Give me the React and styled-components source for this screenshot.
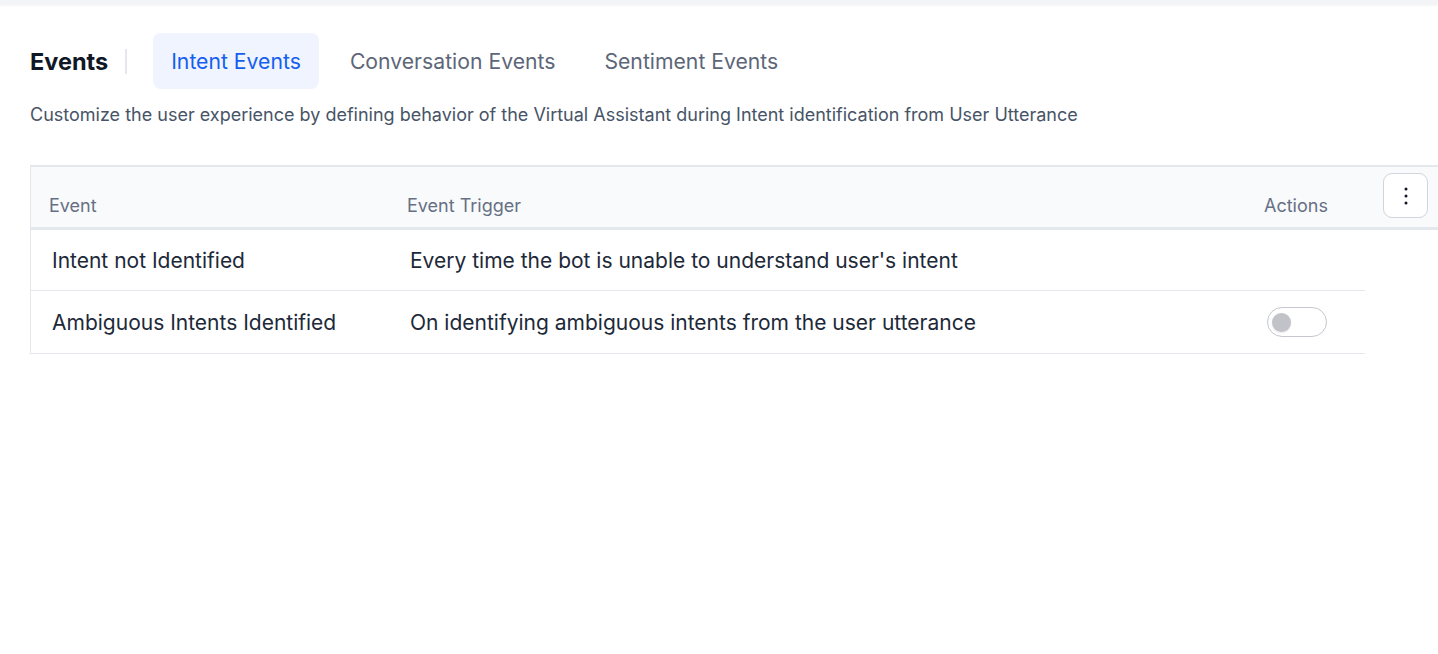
import React, { useState } from 'react'
import styled, { createGlobalStyle } from 'styled-components'

const GlobalStyle = createGlobalStyle`
  html, body {
    margin: 0;
    padding: 0;
    background: #ffffff;
    overflow: hidden;
  }
  body {
    font-family: Inter, "Noto Sans", sans-serif;
    color: #101828;
  }
  * {
    box-sizing: border-box;
  }
`

const TopBar = styled.div`
  height: 4px;
  background: #f2f4f7;
  box-shadow: 0 1px 3px rgba(16, 24, 40, 0.08);
`

const Content = styled.div`
  padding: 29px 0 0 30px;
`

const TabsRow = styled.div`
  display: flex;
  align-items: center;
`

const Title = styled.h1`
  margin: 0;
  font-size: 23.5px;
  font-weight: 700;
  color: #101828;
  padding-right: 17px;
  border-right: 2px solid #e4e7ec;
  line-height: 25px;
  margin-right: 26px;
`

const Tab = styled.button`
  border: none;
  background: ${p => (p.$active ? '#eff4ff' : 'transparent')};
  color: ${p => (p.$active ? '#155eef' : '#5d6679')};
  font-family: inherit;
  font-size: 21.2px;
  font-weight: 400;
  height: 56px;
  padding: 0 18px;
  border-radius: 8px;
  margin-right: 13px;
  cursor: pointer;
`

const Description = styled.p`
  margin: 14px 0 0;
  font-size: 18px;
  color: #475467;
  line-height: 24px;
`

const Table = styled.div`
  margin-top: 38px;
  width: 1335px;
`

const HeadRow = styled.div`
  display: grid;
  grid-template-columns: 358px 857px 1fr;
  width: 1410px;
  height: 65px;
  background: #f9fafb;
  border-top: 2px solid #e4e7ec;
  border-left: 1px solid #e4e7ec;
  border-bottom: 3px solid #e4e7ec;
  position: relative;
`

const HeadCell = styled.div`
  display: flex;
  align-items: flex-end;
  padding: 0 0 11px 18px;
  font-size: 18px;
  color: #667085;
`

const Row = styled.div`
  display: grid;
  grid-template-columns: 358px 857px 1fr;
  height: ${p => p.$h}px;
  border-left: 1px solid #e4e7ec;
  border-bottom: 1px solid #e4e7ec;
  align-items: center;
`

const Cell = styled.div`
  padding-left: 21px;
  font-size: 21px;
  color: #1d2939;
`

const KebabButton = styled.button`
  position: absolute;
  right: 12px;
  top: 6px;
  width: 45px;
  height: 45px;
  border-radius: 9px;
  border: 1px solid #d0d5dd;
  background: #ffffff;
  display: flex;
  align-items: center;
  justify-content: center;
  padding: 0;
  cursor: pointer;
`

const Switch = styled.button`
  width: 60px;
  height: 30px;
  border-radius: 15px;
  border: 1px solid #c4c7ce;
  background: #ffffff;
  padding: 0 0 0 4px;
  display: flex;
  align-items: center;
  justify-content: ${p => (p.$on ? 'flex-end' : 'flex-start')};
  cursor: pointer;
  margin-left: 21px;
`

const Knob = styled.span`
  width: 19px;
  height: 19px;
  border-radius: 50%;
  background: #c1c3c9;
  box-shadow: 0 1px 2px rgba(16, 24, 40, 0.1);
`

const tabs = ['Intent Events', 'Conversation Events', 'Sentiment Events']

const rows = [
  { name: 'Intent not Identified', trigger: "Every time the bot is unable to understand user's intent", toggle: false, h: 61 },
  { name: 'Ambiguous Intents Identified', trigger: 'On identifying ambiguous intents from the user utterance', toggle: true, h: 63 },
]

export default function App() {
  const [active, setActive] = useState(0)
  const [on, setOn] = useState(false)

  return (
    <>
      <GlobalStyle />
      <TopBar />
      <Content>
        <TabsRow>
          <Title>Events</Title>
          {tabs.map((t, i) => (
            <Tab key={t} $active={i === active} onClick={() => setActive(i)}>
              {t}
            </Tab>
          ))}
        </TabsRow>
        <Description>
          Customize the user experience by defining behavior of the Virtual Assistant during Intent identification from User Utterance
        </Description>
        <Table>
          <HeadRow>
            <HeadCell>Event</HeadCell>
            <HeadCell>Event Trigger</HeadCell>
            <HeadCell>Actions</HeadCell>
            <KebabButton>
              <svg width="4" height="18" viewBox="0 0 4 18">
                <circle cx="2" cy="2" r="1.5" fill="#101828" />
                <circle cx="2" cy="9" r="1.5" fill="#101828" />
                <circle cx="2" cy="16" r="1.5" fill="#101828" />
              </svg>
            </KebabButton>
          </HeadRow>
          {rows.map(r => (
            <Row key={r.name} $h={r.h}>
              <Cell>{r.name}</Cell>
              <Cell>{r.trigger}</Cell>
              <div>
                {r.toggle && (
                  <Switch $on={on} onClick={() => setOn(v => !v)}>
                    <Knob />
                  </Switch>
                )}
              </div>
            </Row>
          ))}
        </Table>
      </Content>
    </>
  )
}
